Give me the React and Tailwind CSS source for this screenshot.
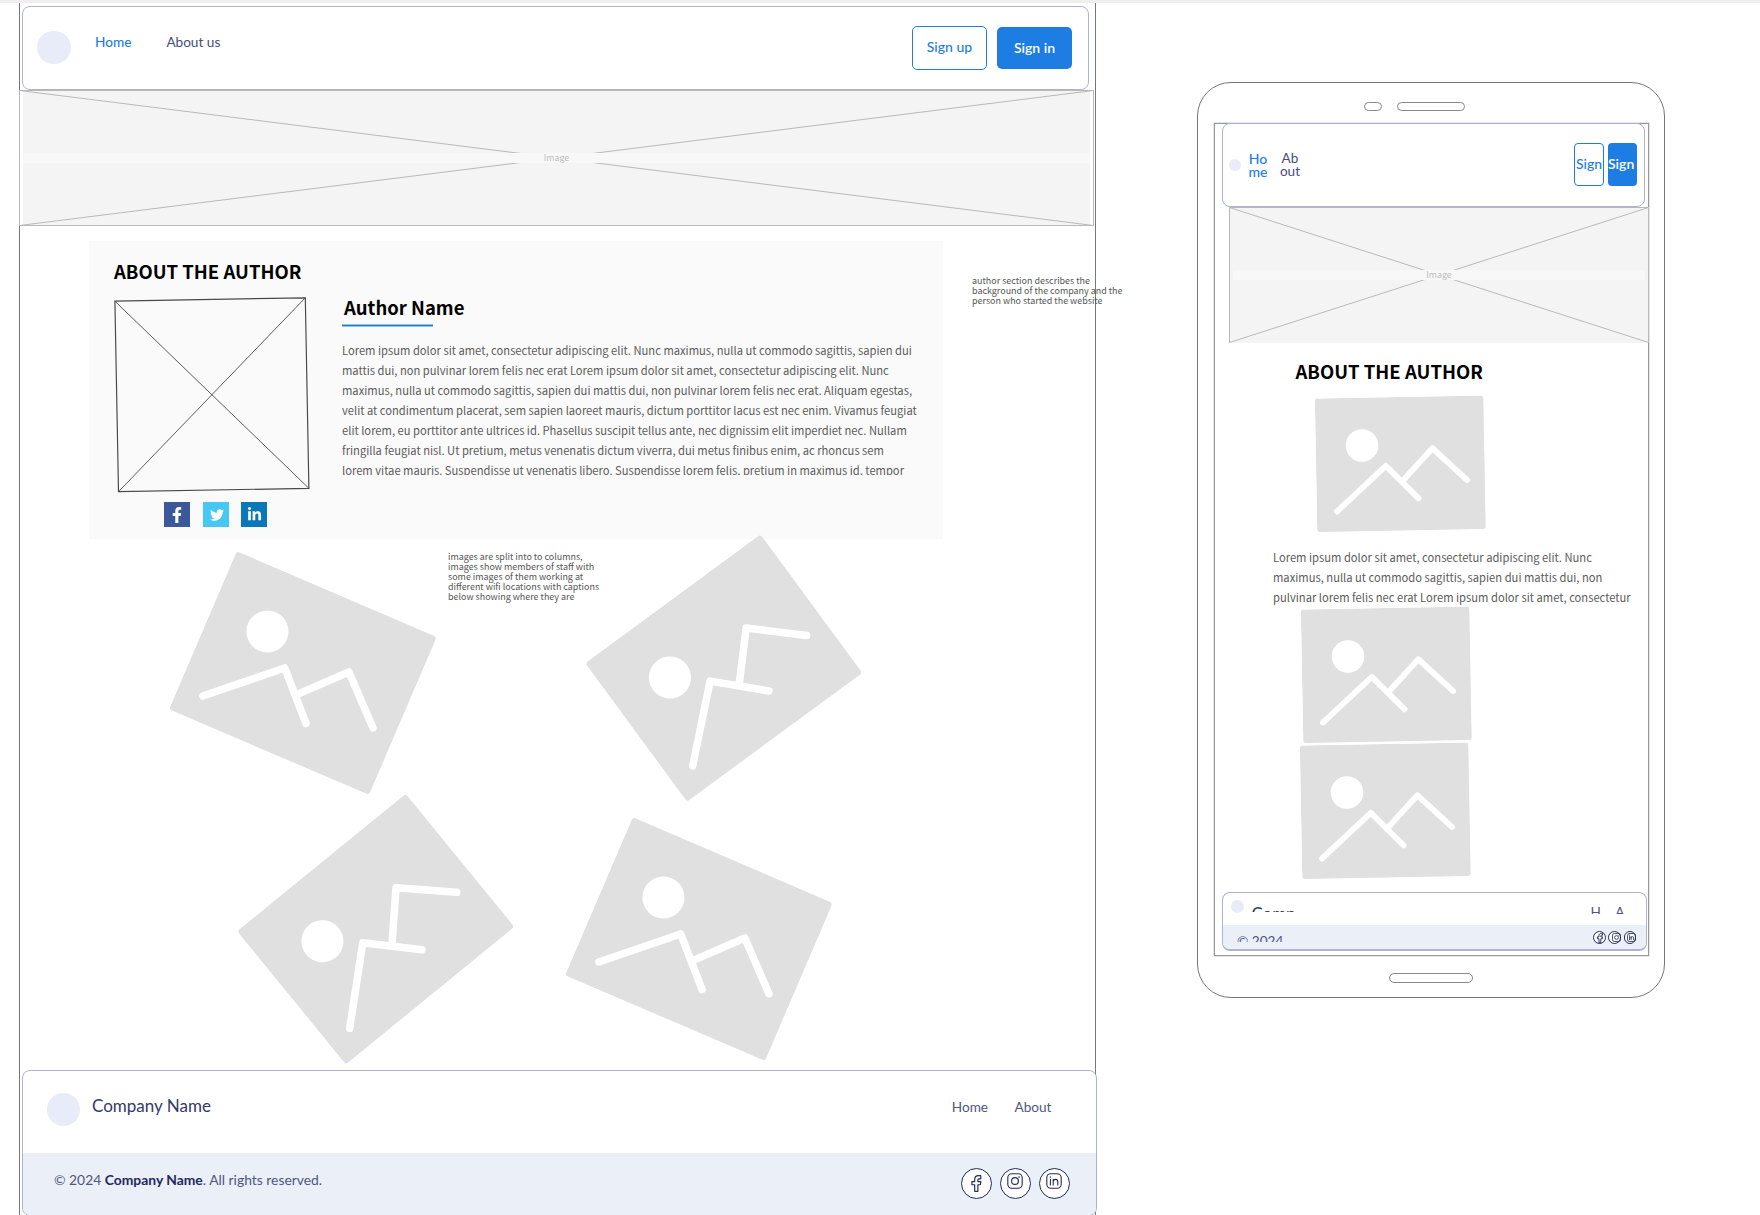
import React from "react";
import { FaFacebookF, FaTwitter, FaLinkedinIn } from "react-icons/fa";

const SOURCE = "font-['Noto_Sans_CJK_SC',sans-serif]";
const LATO = "font-['Lato',sans-serif]";

function ImageBox({ className, openBottom, inset = 0, w, h }) {
  return (
    <div className={`relative flex flex-col justify-center ${className}`}>
      <svg className="absolute inset-0 size-full" viewBox={`0 0 ${w} ${h}`} fill="none" stroke="#b9b9b9">
        <rect x={inset} y="0" width={w - inset * 2} height={h} fill="#f4f4f4" stroke="none" />
        <path d={`M.5 .5 L${w - 0.5} ${h - 0.5} M.5 ${h - 0.5} L${w - 0.5} .5`} />
        <path d={openBottom ? `M.5 ${h} V.5 H${w - 0.5} V${h}` : `M.5 .5 H${w - 0.5} V${h - 0.5} H.5 Z`} />
      </svg>
      <div
        className={`relative mx-1 h-[10px] bg-[#f8f8f8] text-center text-[8.9px] leading-[10px] text-[#bdbdbd] ${SOURCE}`}
      >
        Image
      </div>
    </div>
  );
}

function Photo({ className }) {
  return (
    <svg className={`absolute ${className}`} viewBox="-84.25 -66.75 168.5 133.5">
      <rect x="-84.25" y="-66.75" width="168.5" height="133.5" rx="2.8" fill="#e0e0e0" />
      <circle cx="-37.9" cy="-18.9" r="16.3" fill="#fff" />
      <g fill="none" stroke="#fff" strokeWidth="5.8" strokeLinecap="round" strokeLinejoin="round">
        <path d="M-64.2 46.7 L-14.5 1.8 L17.7 34.9" />
        <path d="M2.2 17.1 L32.4 -14.9 L66.6 17.5" />
      </g>
    </svg>
  );
}

function FacebookGlyph({ className, weight = 1.1 }) {
  return (
    <svg className={className} viewBox="0 0 16 16" fill="none" stroke="#222a5e" strokeWidth={weight} strokeLinejoin="round">
      <path d="M12 .6 H10 C7.6 .6 6.3 2 6.3 4.2 V6.2 H3.7 V9.2 H6.3 V15.4 H9.3 V9.2 H11.6 L12.1 6.2 H9.3 V4.6 C9.3 3.9 9.6 3.6 10.3 3.6 H12 Z" />
    </svg>
  );
}

function InstagramGlyph({ className, weight = 1.1 }) {
  return (
    <svg className={className} viewBox="0 0 16 16" fill="none" stroke="#222a5e" strokeWidth={weight}>
      <rect x=".8" y=".8" width="14.4" height="14.4" rx="4" />
      <circle cx="8" cy="8" r="3.4" />
      <circle cx="12.1" cy="3.9" r=".5" fill="#222a5e" strokeWidth=".5" />
    </svg>
  );
}

function LinkedinGlyph({ className, weight = 1.1 }) {
  return (
    <svg className={className} viewBox="0 0 16 16" fill="none" stroke="#222a5e" strokeWidth={weight} strokeLinecap="round">
      <rect x=".8" y=".8" width="14.4" height="14.4" rx="4" />
      <path d="M4.4 6.4 V12 M4.4 3.9 V4.3 M7.2 12 V6.4 M7.2 8.8 C7.2 7.3 8.2 6.4 9.5 6.4 C10.9 6.4 11.8 7.3 11.8 8.8 V12" />
    </svg>
  );
}

const bio = [
  "Lorem ipsum dolor sit amet, consectetur adipiscing elit. Nunc maximus, nulla ut commodo sagittis, sapien dui",
  "mattis dui, non pulvinar lorem felis nec erat Lorem ipsum dolor sit amet, consectetur adipiscing elit. Nunc",
  "maximus, nulla ut commodo sagittis, sapien dui mattis dui, non pulvinar lorem felis nec erat. Aliquam egestas,",
  "velit at condimentum placerat, sem sapien laoreet mauris, dictum porttitor lacus est nec enim. Vivamus feugiat",
  "elit lorem, eu porttitor ante ultrices id. Phasellus suscipit tellus ante, nec dignissim elit imperdiet nec. Nullam",
  "fringilla feugiat nisl. Ut pretium, metus venenatis dictum viverra, dui metus finibus enim, ac rhoncus sem",
  "lorem vitae mauris. Suspendisse ut venenatis libero. Suspendisse lorem felis, pretium in maximus id, tempor",
];

const mobileBio = [
  "Lorem ipsum dolor sit amet, consectetur adipiscing elit. Nunc",
  "maximus, nulla ut commodo sagittis, sapien dui mattis dui, non",
  "pulvinar lorem felis nec erat Lorem ipsum dolor sit amet, consectetur",
];

const galleryNote = [
  "images are split into to columns,",
  "images show members of staff with",
  "some images of them working at",
  "different wifi locations with captions",
  "below showing where they are",
];

const authorNote = ["author section describes the", "background of the company and the", "person who started the website"];

function Lines({ items, className }) {
  return (
    <div className={`whitespace-nowrap ${SOURCE} ${className}`}>
      {items.map((t) => (
        <div key={t}>{t}</div>
      ))}
    </div>
  );
}

function DesktopHeader() {
  return (
    <header
      className={`mt-[3px] ml-[2px] flex h-[84px] w-[1067px] shrink-0 items-start rounded-lg border border-[#adb3cf] bg-white text-[13.6px] leading-5 ${LATO}`}
    >
      <div className="mt-6 ml-[14px] h-[33px] w-[34px] rounded-full bg-[#e8ecf8]" />
      <span className="mt-[25px] ml-6 font-medium text-[#1d7de3]">Home</span>
      <span className="mt-[25px] ml-[35px] text-[#474d7b]">About us</span>
      <div className="mt-[19px] mr-4 ml-auto flex items-center gap-[10px] text-[14px]">
        <div className="flex h-11 w-[75px] items-center justify-center rounded-[5px] border border-[#1d7de3] pb-[3px] font-medium text-[#1d7de3]">
          Sign up
        </div>
        <div className="flex h-[42px] w-[75px] items-center justify-center rounded-[5px] bg-[#1d7de3] pb-px font-semibold text-white">
          Sign in
        </div>
      </div>
    </header>
  );
}

function AuthorSection() {
  return (
    <section className={`mt-[15px] ml-[69px] flex h-[298px] w-[854px] shrink-0 gap-8 bg-[#fafafa] pl-[25px] ${SOURCE}`}>
      <div className="w-[196px] shrink-0 pt-4">
        <h2 className="text-[18.5px] leading-7 font-bold whitespace-nowrap text-black">ABOUT THE AUTHOR</h2>
        <svg className="mt-3 block h-[196px] w-[196px]" viewBox="0 0 196 196" fill="none" stroke="#4a4a4a">
          <path d="M.9 4.2 L191.3 .8 L194.9 191.3 L4.5 194.7 Z" strokeWidth="1.2" />
          <path d="M.9 4.2 L194.9 191.3 M191.3 .8 L4.5 194.7" strokeWidth=".9" />
        </svg>
        <div className="mt-[9px] ml-[50px] flex text-white">
          <div className="flex h-[25px] w-[26px] items-center justify-center bg-[#3b5998]">
            <FaFacebookF className="size-4" />
          </div>
          <div className="ml-[13px] flex h-[25px] w-[26px] items-center justify-center bg-[#47c8f3]">
            <FaTwitter className="mt-px ml-px size-[14px]" />
          </div>
          <div className="ml-3 flex h-[25px] w-[26px] items-center justify-center bg-[#0a77b8]">
            <FaLinkedinIn className="size-[15px]" />
          </div>
        </div>
      </div>
      <div className="pt-[52px]">
        <h3 className="ml-[2px] text-[18.5px] leading-7 font-bold text-black">Author Name</h3>
        <div className="mt-[3px] h-[3px] w-[91px] border-y border-[#8fc2e6] bg-[#1f7fc4]" />
        <Lines items={bio} className="mt-[13px] h-[135px] overflow-hidden text-[11.2px] leading-5 text-[#5c5c5c]" />
      </div>
    </section>
  );
}

function DesktopFooter() {
  const badge = "relative flex size-[31px] items-center justify-center rounded-full border border-[#222a5e] bg-white";
  return (
    <footer
      className={`relative ml-[2px] flex h-[146px] w-[1075px] shrink-0 flex-col overflow-hidden rounded-lg border border-[#adb3cf] bg-white text-[13.6px] leading-5 text-[#50567f] ${LATO}`}
    >
      <div className="flex h-[82px] shrink-0 items-start">
        <div className="mt-[22px] ml-6 size-[33px] rounded-full bg-[#e8ecf8]" />
        <span className="mt-[23px] ml-3 text-[17px] leading-6 text-[#333a69]">Company Name</span>
        <nav className="mt-[26px] mr-[44.5px] ml-auto flex gap-[26.5px]">
          <span>Home</span>
          <span>About</span>
        </nav>
      </div>
      <div className="flex flex-1 items-start bg-[#ebeff8]">
        <p className="mt-[17px] ml-[31px] text-[13.87px]">
          © 2024 <span className="font-bold text-[#222a5e]">Company Name</span>. All rights reserved.
        </p>
        <div className="mt-[15px] mr-[26.5px] ml-auto flex gap-[7.6px]">
          <div className={badge}>
            <FacebookGlyph className="h-[17px] w-[17px]" />
          </div>
          <div className={badge}>
            <InstagramGlyph className="mb-[5px] size-4" />
          </div>
          <div className={badge}>
            <LinkedinGlyph className="mb-[5px] size-4" />
          </div>
        </div>
      </div>
    </footer>
  );
}

function Phone() {
  const dot = "flex size-[12.5px] items-center justify-center rounded-full border border-[#222a5e] bg-white";
  return (
    <div className="mt-[79px] ml-[101px] flex h-[916px] w-[468px] shrink-0 flex-col rounded-[34px] border border-[#777] bg-white">
      <div className="mt-[19px] ml-[166px] flex gap-[15px]">
        <div className="h-[9px] w-[18px] rounded-full border border-[#888]" />
        <div className="h-[9px] w-[68px] rounded-full border border-[#888]" />
      </div>
      <div className="mt-3 ml-[15.5px] flex h-[833px] w-[435px] shrink-0 flex-col border border-[#999] shadow-[0_0_0_0.5px_#ccc]">
        <header
          className={`-mt-px ml-[7.5px] flex h-[84px] w-[423px] shrink-0 items-start rounded-lg border border-[#adb3cf] bg-white text-[14px] ${LATO}`}
        >
          <div className="mt-[34.5px] ml-[6px] size-3 rounded-full bg-[#e8ecf8]" />
          <div className="mt-[28px] ml-[7px] w-5 text-center leading-[13px] font-medium text-[#1d7de3]">
            Ho
            <br />
            me
          </div>
          <div className="mt-[28px] ml-[10px] w-6 text-center text-[13.6px] leading-[13px] text-[#474d7b]">
            Ab
            <br />
            out
          </div>
          <div className="mt-[19px] mr-[7px] ml-auto flex gap-1">
            <div className="flex h-[43px] w-[30px] items-center justify-center rounded-[4px] border border-[#1d7de3] pb-[3px] font-medium text-[#1d7de3]">
              Sign
            </div>
            <div className="flex h-[43px] w-[29px] items-center rounded-[4px] bg-[#1d7de3] pb-[3px] font-semibold text-white">
              Sign
            </div>
          </div>
        </header>
        <ImageBox className="ml-[14.5px] h-[136px] w-[420px] shrink-0" w={420} h={136} openBottom />
        <h2 className={`mt-[14px] ml-[81px] text-[18.5px] leading-7 font-bold text-black ${SOURCE}`}>ABOUT THE AUTHOR</h2>
        <div className="relative h-[507px] shrink-0">
          <Photo className="top-[12.1px] left-[101.2px] w-[168.5px] -rotate-[1.05deg]" />
          <Photo className="top-[222.8px] left-[87.2px] w-[168.5px] -rotate-[1.05deg]" />
          <Photo className="top-[358.8px] left-[86.2px] w-[168.5px] -rotate-[1.05deg]" />
          <Lines items={mobileBio} className="absolute top-[162px] left-[58.5px] text-[11.2px] leading-5 text-[#5c5c5c]" />
        </div>
        <footer
          className={`relative ml-[7.5px] flex h-[59px] w-[425px] shrink-0 flex-col overflow-hidden rounded-lg border border-b-2 border-[#adb3cf] bg-white text-[13.6px] leading-5 text-[#50567f] ${LATO}`}
        >
          <div className="flex h-8 shrink-0 items-start">
            <div className="mt-[7px] ml-2 size-[13px] rounded-full bg-[#e8ecf8]" />
            <div className="mt-[9px] ml-[7.5px] h-[10px] overflow-hidden text-[16.9px] leading-6 text-[#333a69]">Comp</div>
            <div className="mt-[9px] mr-[21.5px] ml-auto flex h-3 gap-[14.4px] overflow-hidden">
              <span>H</span>
              <span>A</span>
            </div>
          </div>
          <div className="flex flex-1 items-start bg-[#ebeff8]">
            <div className="mt-[6px] ml-[14px] h-[11px] overflow-hidden">© 2024</div>
            <div className="mt-[6px] mr-[10px] ml-auto flex gap-[2.7px]">
              <div className={dot}>
                <FacebookGlyph className="mt-px ml-px size-[10px] shrink-0" weight={1.5} />
              </div>
              <div className={dot}>
                <InstagramGlyph className="mt-px ml-[3px] size-[9px] shrink-0" weight={1.5} />
              </div>
              <div className={dot}>
                <LinkedinGlyph className="mt-px ml-[3px] size-[9px] shrink-0" weight={1.5} />
              </div>
            </div>
          </div>
        </footer>
      </div>
      <div className="mx-auto mt-[17px] h-[10px] w-[84px] shrink-0 rounded-full border border-[#888]" />
    </div>
  );
}

export default function App() {
  return (
    <div className="relative h-[1215px] w-[1760px] overflow-hidden bg-white">
      <div className="h-[3px] bg-[#efefef]" />
      <div className="flex items-start">
        <main className="ml-[19px] flex h-[1212px] w-[1077px] shrink-0 flex-col border-x border-[#777]">
          <DesktopHeader />
          <ImageBox className="-ml-px h-[136px] w-[1075px] shrink-0" w={1075} h={136} inset={4} />
          <AuthorSection />
          <div className="relative h-[531px] shrink-0">
            <Photo className="top-[47.8px] left-[174.4px] w-[217.6px] rotate-[23.2deg]" />
            <Photo className="top-[42.7px] left-[594.7px] w-[217.6px] -rotate-[36.3deg]" />
            <Photo className="top-[303.7px] left-[246.5px] w-[217.6px] -rotate-[39.2deg]" />
            <Photo className="top-[314.2px] left-[570.3px] w-[217.6px] rotate-[23.2deg]" />
            <Lines items={galleryNote} className="absolute top-[13px] left-[428px] text-[8.95px] leading-[10px] text-[#565656]" />
          </div>
          <DesktopFooter />
        </main>
        <Phone />
      </div>
      <Lines items={authorNote} className="absolute top-[276px] left-[972px] text-[8.95px] leading-[10px] text-[#565656]" />
    </div>
  );
}
